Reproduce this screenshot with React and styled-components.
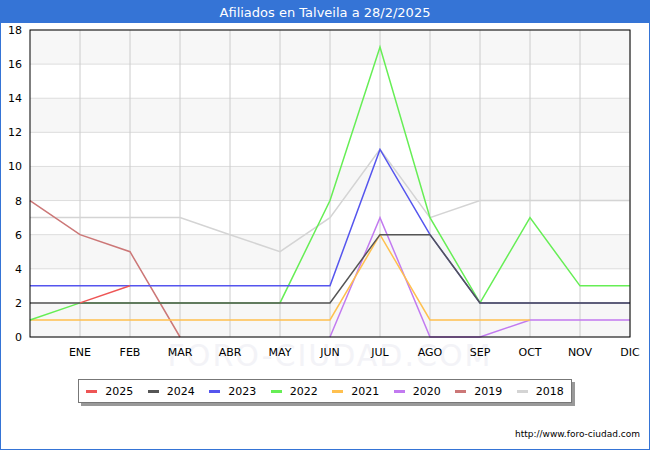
import React from "react";
import styled, { createGlobalStyle } from "styled-components";

const G = createGlobalStyle`body{margin:0;font-family:"DejaVu Sans",sans-serif;}`;
const Frame = styled.div`width:648px;height:448px;border:1px solid #3574d6;display:flex;flex-direction:column;background:#fff;position:relative;`;
const Title = styled.div`height:22px;background:#3574d6;color:#fff;font-size:13px;display:flex;align-items:center;justify-content:center;`;
const Legend = styled.div`align-self:flex-start;margin:8px 0 0 77px;width:492px;height:22px;border:1px solid #777;box-shadow:3px 3px 0 #999;display:flex;align-items:center;justify-content:space-around;font-size:11px;`;
const Item = styled.span`display:flex;align-items:center;gap:8px;`;
const Swatch = styled.i`width:11px;height:3px;background:${p=>p.c};display:block;`;
const Url = styled.div`align-self:flex-end;margin:26px 9px 0 0;font-size:9px;`;

const series = [
  ["2018","#d4d4d4",[7,7,7,7,6,5,7,11,7,8,8,8,8]],
  ["2019","#cc7777",[8,6,5,0]],
  ["2020","#c27af0",[null,null,null,null,null,null,0,7,0,0,1,1,1]],
  ["2021","#ffc04f",[1,1,1,1,1,1,1,6,1,1,1]],
  ["2022","#66ee55",[1,2,2,2,2,2,8,17,7,2,7,3,3]],
  ["2023","#5555ee",[3,3,3,3,3,3,3,11,6,2,2,2,2]],
  ["2024","#555555",[2,2,2,2,2,2,2,6,6,2,2,2,2]],
  ["2025","#ee5555",[null,2,3]],
];
const months=["ENE","FEB","MAR","ABR","MAY","JUN","JUL","AGO","SEP","OCT","NOV","DIC"];
const X=i=>30+i*50, Y=v=>337-v*(307/18);

function Chart(){
  return (
    <svg width="648" height="348" viewBox="1 23 648 348" style={{display:"block"}}>
      {[0,2,4,6,8].map(k=><rect key={k} x={30} y={Y(2*k+2)} width={600} height={Y(2*k+1)-Y(2*k+2)+17} fill="#f7f7f7"/>)}
      <text x={330} y={366} fontSize="30" textAnchor="middle" fill="#f3f3f7" letterSpacing="2">FORO-CIUDAD.COM</text>
      {Array.from({length:10},(_,k)=><g key={k}><line x1={30} x2={630} y1={Y(2*k)} y2={Y(2*k)} stroke="#ddd"/>
        <text x={22} y={Y(2*k)+4} fontSize="11" textAnchor="end" fill="#000">{2*k}</text></g>)}
      {months.map((m,i)=><g key={m}><line x1={X(i+1)} x2={X(i+1)} y1={30} y2={337} stroke="#ccc"/>
        <text x={X(i+1)} y={356} fontSize="11" textAnchor="middle">{m}</text></g>)}
      {series.map(([n,c,d])=>{
        const pts=d.map((v,i)=>v==null?null:`${X(i)},${Y(v)}`).filter(Boolean).join(" ");
        return <polyline key={n} points={pts} fill="none" stroke={c} strokeWidth="1.5"/>;
      })}
      <rect x={30} y={30} width={600} height={307} fill="none" stroke="#000"/>
    </svg>
  );
}

export default function App(){
  return <><G/><Frame>
    <Title>Afiliados en Talveila a 28/2/2025</Title>
    <Chart/>
    <Legend>{[...series].reverse().map(([n,c])=><Item key={n}><Swatch c={c}/>{n}</Item>)}</Legend>
    <Url>http://www.foro-ciudad.com</Url>
  </Frame></>;
}
